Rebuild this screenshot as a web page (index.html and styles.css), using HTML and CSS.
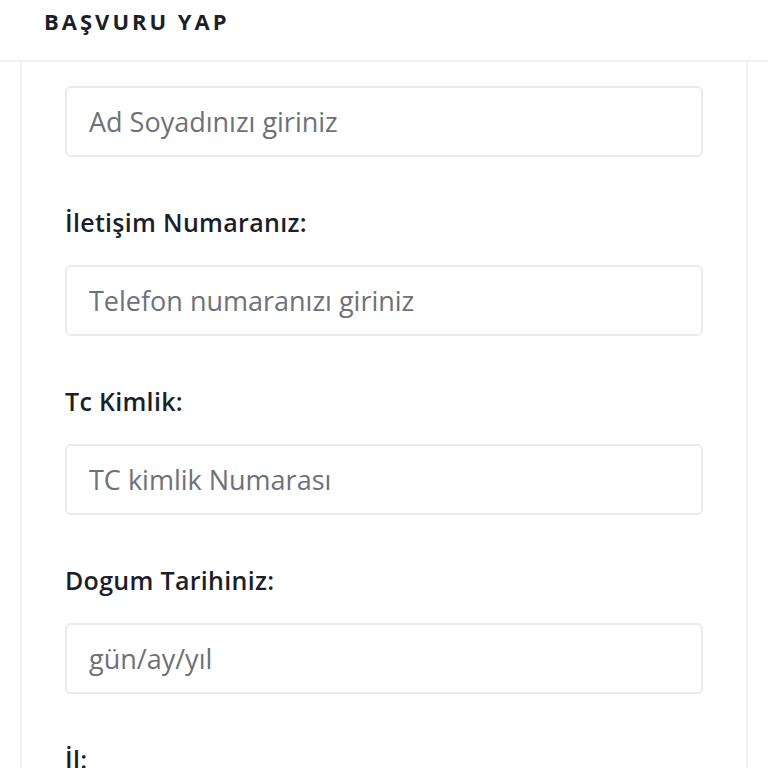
FILE: index.html
```html
<!DOCTYPE html>
<html lang="tr">
<head>
  <meta charset="UTF-8">
  <title>Başvuru Yap</title>
  <link rel="stylesheet" href="styles.css">
</head>
<body>
  <div class="header">
    <h1>BAŞVURU YAP</h1>
  </div>

  <div class="card">
    <form class="form">
      <input type="text" class="field" placeholder="Ad Soyadınızı giriniz">

      <label for="phone">İletişim Numaranız:</label>
      <input type="text" id="phone" class="field" placeholder="Telefon numaranızı giriniz">

      <label for="tc">Tc Kimlik:</label>
      <input type="text" id="tc" class="field" placeholder="TC kimlik Numarası">

      <label for="dob">Dogum Tarihiniz:</label>
      <input type="text" id="dob" class="field" placeholder="gün/ay/yıl">

      <label for="city">İl:</label>
    </form>
  </div>
</body>
</html>
```

FILE: styles.css
```css
/* Base */
body {
  margin: 0;
  font-family: 'Open Sans', sans-serif;
  background: #FFFFFF;
  color: #1C1F2A;
  overflow: hidden;
}

.header {
  height: 60px;
  padding: 0 44px;
  border-bottom: 2px solid #F0F0F0;
}

.header h1 {
  margin: 0;
  padding-top: 6px;
  font-size: 22px;
  font-weight: 700;
  letter-spacing: 3px;
  line-height: 30px;
  color: #1C1F2A;
}

.card {
  margin: 0 20px;
  border-left: 2px solid #F2F2F2;
  border-right: 2px solid #F2F2F2;
  padding: 24px 43px 0;
  min-height: 800px;
}

.form {
  display: flex;
  flex-direction: column;
}

.field {
  box-sizing: border-box;
  width: 100%;
  height: 71px;
  margin-bottom: 50px;
  padding: 0 22px;
  border: 2px solid #EBEBEB;
  border-radius: 6px;
  font-family: 'Open Sans', sans-serif;
  font-size: 27px;
  color: #333;
  background: #FFFFFF;
}

.field::placeholder {
  color: #6E7178;
}

label {
  display: block;
  margin-bottom: 28px;
  font-size: 25px;
  font-weight: 600;
  letter-spacing: 0.3px;
  line-height: 30px;
  color: #1C1F2A;
}
```
